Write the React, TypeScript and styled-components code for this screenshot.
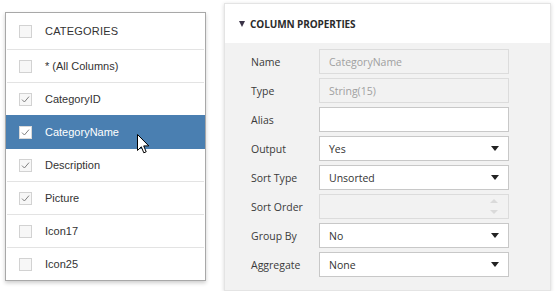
import styled, { createGlobalStyle } from "styled-components";

const GlobalStyle = createGlobalStyle`
  body {
    margin: 0;
    background: #ffffff;
  }
`;

const columns = [
  { name: "* (All Columns)", checked: false },
  { name: "CategoryID", checked: true },
  { name: "CategoryName", checked: true, selected: true },
  { name: "Description", checked: true },
  { name: "Picture", checked: true },
  { name: "Icon17", checked: false },
  { name: "Icon25", checked: false },
];

type FieldDef = {
  label: string;
  value?: string;
  kind: "text" | "select" | "spin";
  disabled?: boolean;
};

const fields: FieldDef[] = [
  { label: "Name", value: "CategoryName", kind: "text", disabled: true },
  { label: "Type", value: "String(15)", kind: "text", disabled: true },
  { label: "Alias", value: "", kind: "text" },
  { label: "Output", value: "Yes", kind: "select" },
  { label: "Sort Type", value: "Unsorted", kind: "select" },
  { label: "Sort Order", value: "", kind: "spin", disabled: true },
  { label: "Group By", value: "No", kind: "select" },
  { label: "Aggregate", value: "None", kind: "select" },
];

function Check({ checked, onDark }: { checked: boolean; onDark?: boolean }) {
  return (
    <CheckBox $onDark={onDark}>
      {checked && (
        <svg width="11" height="11" viewBox="0 0 11 11">
          <path d="M2 5.6 L4.4 8 L9 2.6" fill="none" stroke="#808080" strokeWidth="1" />
        </svg>
      )}
    </CheckBox>
  );
}

function Pointer() {
  return (
    <PointerIcon width="13" height="21" viewBox="0 0 13 21">
      <path
        d="M0.5 0.5 L0.5 16.5 L4.3 12.8 L6.8 18.8 L9.2 17.8 L6.7 11.9 L11.8 11.9 Z"
        fill="#ffffff"
        stroke="#000000"
        strokeWidth="1"
      />
    </PointerIcon>
  );
}

export default function App() {
  return (
    <>
      <GlobalStyle />
      <Page>
        <ColumnsPanel>
          <ListRow $header>
            <Check checked={false} />
            <RowText $header>CATEGORIES</RowText>
          </ListRow>
          {columns.map((c, i) => (
            <ListRow key={c.name} $selected={c.selected} $last={i === columns.length - 1}>
              <Check checked={c.checked} onDark={c.selected} />
              <RowText $selected={c.selected}>{c.name}</RowText>
              {c.selected && <Pointer />}
            </ListRow>
          ))}
        </ColumnsPanel>

        <PropsPanel>
          <PanelHeader>
            <Triangle />
            <PanelTitle>COLUMN PROPERTIES</PanelTitle>
          </PanelHeader>
          <PanelBody>
            {fields.map((f) => (
              <FieldRow key={f.label}>
                <FieldLabel>{f.label}</FieldLabel>
                <Field $disabled={f.disabled}>
                  <FieldValue $disabled={f.disabled}>{f.value}</FieldValue>
                  {f.kind === "select" && <Caret />}
                  {f.kind === "spin" && (
                    <Spinner>
                      <SpinArrow $up />
                      <SpinArrow />
                    </Spinner>
                  )}
                </Field>
              </FieldRow>
            ))}
          </PanelBody>
        </PropsPanel>
      </Page>
    </>
  );
}

const Page = styled.div`
  display: flex;
  align-items: flex-start;
  gap: 18px;
  padding: 3px 0 0 5px;
  font-family: "Liberation Sans", Arial, sans-serif;
`;

const ColumnsPanel = styled.div`
  box-sizing: border-box;
  width: 201px;
  margin-top: 9px;
  background: #ffffff;
  border: 1px solid #a8a8a8;
  box-shadow: 0 2px 4px rgba(0, 0, 0, 0.2);
  display: flex;
  flex-direction: column;
`;

const ListRow = styled.div<{ $header?: boolean; $selected?: boolean; $last?: boolean }>`
  position: relative;
  box-sizing: border-box;
  display: flex;
  align-items: center;
  height: ${(p) => (p.$header ? 37 : 33)}px;
  padding-left: 12px;
  margin: ${(p) => (p.$selected ? "-1px 0 0" : "0 1px")};
  border-top: ${(p) => (p.$selected ? "1px solid #4a7fb1" : "none")};
  border-bottom: 1px solid
    ${(p) => (p.$selected ? "#4a7fb1" : p.$last ? "transparent" : "#e3e3e3")};
  background: ${(p) => (p.$selected ? "#4a7fb1" : "transparent")};
  ${(p) => (p.$selected ? "height: 34px; padding-left: 13px;" : "")}
  ${(p) => (p.$last ? "height: 32px; border-bottom: none;" : "")}
`;

const CheckBox = styled.div<{ $onDark?: boolean }>`
  box-sizing: border-box;
  width: 13px;
  height: 13px;
  flex-shrink: 0;
  border: 1px solid ${(p) => (p.$onDark ? "#d8d8d8" : "#d2d2d2")};
  background: ${(p) => (p.$onDark ? "#ffffff" : "#f7f7f7")};
  display: flex;
  align-items: center;
  justify-content: center;
`;

const RowText = styled.span<{ $header?: boolean; $selected?: boolean }>`
  margin-left: 13px;
  font-size: 11px;
  color: ${(p) => (p.$selected ? "#ffffff" : "#333333")};
  letter-spacing: ${(p) => (p.$header ? "0.2px" : "0")};
`;

const PointerIcon = styled.svg`
  position: absolute;
  left: 131px;
  top: 18px;
`;

const PropsPanel = styled.div`
  box-sizing: border-box;
  width: 327px;
  background: #f2f2f2;
  border: 1px solid #e4e4e4;
  box-shadow: 0 1px 4px rgba(0, 0, 0, 0.16);
  font-family: "Open Sans", "Liberation Sans", sans-serif;
`;

const PanelHeader = styled.div`
  height: 39px;
  display: flex;
  align-items: center;
  gap: 5px;
  padding-left: 14px;
  background: #ffffff;
`;

const Triangle = styled.span`
  width: 0;
  height: 0;
  border-left: 3px solid transparent;
  border-right: 3px solid transparent;
  border-top: 6px solid #3a3347;
`;

const PanelTitle = styled.span`
  font-size: 10px;
  font-weight: 700;
  color: #2b2b2b;
  letter-spacing: -0.1px;
`;

const PanelBody = styled.div`
  display: flex;
  flex-direction: column;
  gap: 4px;
  padding: 6px 0 13px 26px;
`;

const FieldRow = styled.div`
  display: grid;
  grid-template-columns: 68px 190px;
  align-items: center;
`;

const FieldLabel = styled.span`
  font-size: 10.5px;
  color: #3a3a3a;
`;

const Field = styled.div<{ $disabled?: boolean }>`
  position: relative;
  box-sizing: border-box;
  height: 25px;
  display: flex;
  align-items: center;
  padding: 0 9px;
  border: 1px solid ${(p) => (p.$disabled ? "#dcdcdc" : "#c8c8c8")};
  background: ${(p) => (p.$disabled ? "#f2f2f2" : "#ffffff")};
`;

const FieldValue = styled.span<{ $disabled?: boolean }>`
  flex: 1;
  font-size: 10.5px;
  color: ${(p) => (p.$disabled ? "#a0a0a0" : "#333333")};
`;

const Caret = styled.span`
  width: 0;
  height: 0;
  border-left: 4px solid transparent;
  border-right: 4px solid transparent;
  border-top: 5px solid #222222;
`;

const Spinner = styled.div`
  display: flex;
  flex-direction: column;
  gap: 7px;
  margin-right: 1px;
`;

const SpinArrow = styled.span<{ $up?: boolean }>`
  width: 0;
  height: 0;
  border-left: 4px solid transparent;
  border-right: 4px solid transparent;
  ${(p) => (p.$up ? "border-bottom: 4px solid #dadada;" : "border-top: 4px solid #dadada;")}
`;
